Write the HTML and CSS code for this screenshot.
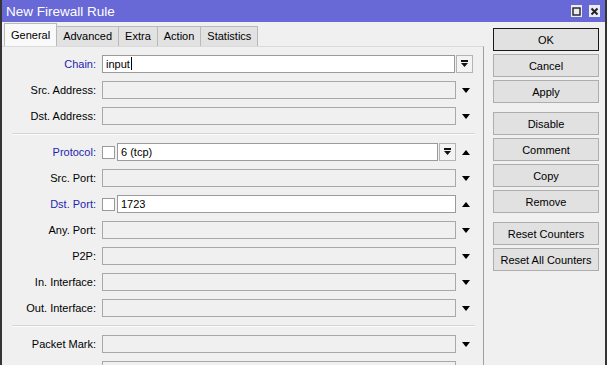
FILE: index.html
```html
<!DOCTYPE html>
<html lang="en">
<head>
  <meta charset="UTF-8">
  <title>New Firewall Rule</title>
  <meta name="viewport" content="width=device-width, initial-scale=1" />
  <link rel="stylesheet" href="styles.css">
</head>
<body>
  <div class="window">
    <div class="titlebar">
      <span class="title">New Firewall Rule</span>
      <div class="title-btns">
        <span class="tbtn">
          <svg width="11" height="11" viewBox="0 0 11 11"><rect x="2" y="2" width="7" height="7" fill="none" stroke="#222" stroke-width="1.4"/></svg>
        </span>
        <span class="tbtn">
          <svg width="11" height="11" viewBox="0 0 11 11"><path d="M2.5 2.5 L8.5 8.5 M8.5 2.5 L2.5 8.5" stroke="#222" stroke-width="2"/></svg>
        </span>
      </div>
    </div>

    <div class="main">
      <div class="editor">
        <div class="tabs">
          <div class="tab active">General</div>
          <div class="tab">Advanced</div>
          <div class="tab">Extra</div>
          <div class="tab">Action</div>
          <div class="tab">Statistics</div>
        </div>

        <div class="panel">
          <div class="row">
            <label class="lbl blue">Chain:</label>
            <div class="field wide">
              <div class="box on">input<span class="caret"></span></div>
              <span class="dd">
                <svg width="9" height="8" viewBox="0 0 9 8"><rect x="1" y="0" width="7" height="2" fill="#111"/><polygon points="1,3 8,3 4.5,7" fill="#111"/></svg>
              </span>
            </div>
          </div>
          <div class="row">
            <label class="lbl">Src. Address:</label>
            <div class="field"><div class="box"></div></div>
            <span class="arrow down"></span>
          </div>
          <div class="row">
            <label class="lbl">Dst. Address:</label>
            <div class="field"><div class="box"></div></div>
            <span class="arrow down"></span>
          </div>

          <div class="sep"></div>

          <div class="row">
            <label class="lbl blue">Protocol:</label>
            <div class="field">
              <span class="check"></span>
              <div class="box on">6 (tcp)</div>
              <span class="dd">
                <svg width="9" height="8" viewBox="0 0 9 8"><rect x="1" y="0" width="7" height="2" fill="#111"/><polygon points="1,3 8,3 4.5,7" fill="#111"/></svg>
              </span>
            </div>
            <span class="arrow up"></span>
          </div>
          <div class="row">
            <label class="lbl">Src. Port:</label>
            <div class="field"><div class="box"></div></div>
            <span class="arrow down"></span>
          </div>
          <div class="row">
            <label class="lbl blue">Dst. Port:</label>
            <div class="field">
              <span class="check"></span>
              <div class="box on">1723</div>
            </div>
            <span class="arrow up"></span>
          </div>
          <div class="row">
            <label class="lbl">Any. Port:</label>
            <div class="field"><div class="box"></div></div>
            <span class="arrow down"></span>
          </div>
          <div class="row">
            <label class="lbl">P2P:</label>
            <div class="field"><div class="box"></div></div>
            <span class="arrow down"></span>
          </div>
          <div class="row">
            <label class="lbl">In. Interface:</label>
            <div class="field"><div class="box"></div></div>
            <span class="arrow down"></span>
          </div>
          <div class="row">
            <label class="lbl">Out. Interface:</label>
            <div class="field"><div class="box"></div></div>
            <span class="arrow down"></span>
          </div>

          <div class="sep"></div>

          <div class="row">
            <label class="lbl">Packet Mark:</label>
            <div class="field"><div class="box"></div></div>
            <span class="arrow down"></span>
          </div>
          <div class="row">
            <label class="lbl"></label>
            <div class="field"><div class="box"></div></div>
            <span class="arrow down"></span>
          </div>
        </div>
      </div>

      <div class="actions">
        <div class="group">
          <button class="btn default">OK</button>
          <button class="btn">Cancel</button>
          <button class="btn">Apply</button>
        </div>
        <div class="group">
          <button class="btn">Disable</button>
          <button class="btn">Comment</button>
          <button class="btn">Copy</button>
          <button class="btn">Remove</button>
        </div>
        <div class="group">
          <button class="btn">Reset Counters</button>
          <button class="btn">Reset All Counters</button>
        </div>
      </div>
    </div>
  </div>
</body>
</html>
```

FILE: styles.css
```css
html, body { margin: 0; height: 100%; overflow: hidden; }
body { font-family: "Liberation Sans", Arial, sans-serif; font-size: 11px; color: #000; background: #f0f0f0; }

.window { height: 365px; box-sizing: border-box; border-left: 2px solid #343434; border-right: 2px solid #343434; background: #f0f0f0; overflow: hidden; }

.titlebar { height: 22px; background: #6868d6; color: #fff; display: flex; align-items: center; justify-content: space-between; padding: 0 4px 0 4px; }
.title { font-size: 13.5px; }
.title-btns { display: flex; gap: 7px; padding-right: 1px; }
.tbtn { width: 11px; height: 12px; background: #ececf6; display: flex; align-items: center; justify-content: center; }

.main { display: flex; }
.editor { width: 482px; }

.tabs { display: flex; align-items: flex-end; height: 24px; padding-left: 2px; }
.tab { height: 19px; line-height: 19px; padding: 0 6px; background: #e2e2e2; border: 1px solid #b9b9b9; border-bottom: none; margin-left: -1px; font-size: 11px; }
.tab.active { height: 22px; line-height: 22px; background: #f9f9f9; margin-left: 0; padding: 0 6px; position: relative; z-index: 1; }

.panel { border-top: 1px solid #dadada; border-right: 1px solid #a0a0a0; padding-top: 8px; height: 320px; display: flex; flex-direction: column; gap: 8px; }

.row { display: flex; align-items: center; height: 18px; flex-shrink: 0; }
.lbl { width: 94px; margin-right: 6px; text-align: right; white-space: nowrap; }
.lbl.blue { color: #1e1eb0; }

.field { width: 354px; height: 18px; display: flex; align-items: center; }
.field.wide { width: 371px; }

.box { flex: 1; height: 18px; box-sizing: border-box; border: 1px solid #a8a8a8; background: #f0f0f0; padding: 0 3px; line-height: 16px; white-space: nowrap; }
.box.on { background: #fff; border-color: #9a9a9a; }
.caret { display: inline-block; width: 1px; height: 13px; background: #000; vertical-align: -2px; margin-left: 1px; }

.dd { width: 17px; height: 18px; box-sizing: border-box; margin-left: 1px; border: 1px solid #b4b4b4; background: #f3f3f3; display: flex; align-items: center; justify-content: center; }

.check { width: 13px; height: 13px; box-sizing: border-box; border: 1px solid #9a9a9a; background: #fff; margin-right: 2px; }

.arrow { width: 20px; display: flex; justify-content: center; }
.arrow::before { content: ""; border-left: 4.5px solid transparent; border-right: 4.5px solid transparent; }
.arrow.down::before { border-top: 5px solid #000; }
.arrow.up::before { border-bottom: 5px solid #000; }

.sep { height: 1px; flex-shrink: 0; margin: 0 8px 0 10px; background: #d6d6d6; border-bottom: 1px solid #fbfbfb; }

.actions { padding: 6px 0 0 9px; display: flex; flex-direction: column; gap: 9px; }
.group { display: flex; flex-direction: column; gap: 3px; }
.btn { width: 106px; height: 23px; font-family: inherit; font-size: 11px; color: #000; background: #e1e1e1; border: 1px solid #adadad; padding: 0; }
.btn.default { border-color: #1a1a1a; }
```
